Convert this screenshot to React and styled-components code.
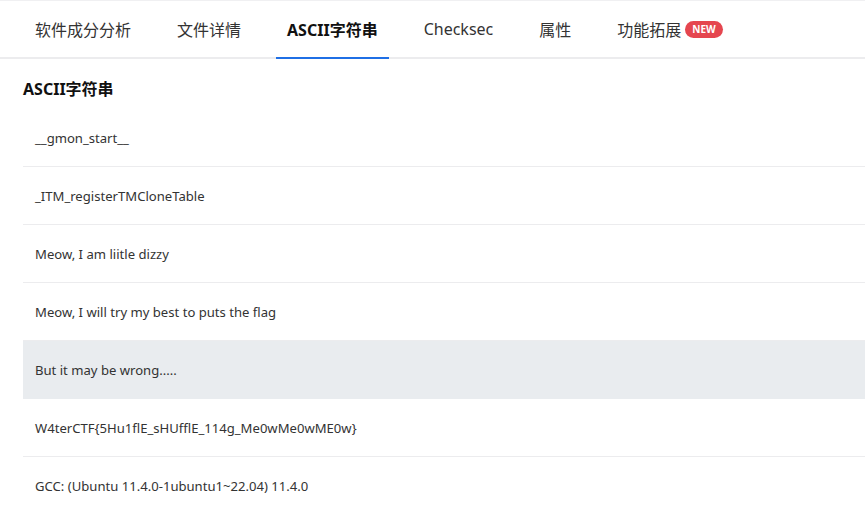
import React from "react";
import styled, { createGlobalStyle } from "styled-components";

const Global = createGlobalStyle`
  html, body { margin: 0; padding: 0; background: #fff; }
  body { font-family: "Noto Sans", "Noto Sans CJK SC", sans-serif; color: #333; }
`;

const Page = styled.div`
  width: 865px;
  height: 513px;
  overflow: hidden;
  background: #fff;
`;

const TabBar = styled.div`
  display: flex;
  align-items: stretch;
  gap: 24px;
  height: 59px;
  box-sizing: border-box;
  padding-left: 24px;
  border-top: 1px solid #f0f0f2;
  border-bottom: 2px solid #ececee;
`;

const Tab = styled.div`
  position: relative;
  display: flex;
  align-items: center;
  padding: 0 11px;
  font-size: 16px;
  font-family: "Noto Sans", "Noto Sans CJK SC", sans-serif;
  color: ${(p) => (p.$active ? "#111" : "#333")};
  font-weight: ${(p) => (p.$active ? 700 : 400)};
  white-space: nowrap;
  &::after {
    content: "";
    display: ${(p) => (p.$active ? "block" : "none")};
    position: absolute;
    left: 0;
    right: 0;
    bottom: -2px;
    height: 2px;
    background: #1f6fe5;
  }
`;

const Badge = styled.span`
  margin-left: 4px;
  background: #e5464f;
  color: #fff;
  font-size: 10px;
  font-weight: 700;
  line-height: 17px;
  padding: 0 7px;
  border-radius: 9px;
  font-family: "Open Sans", "Noto Sans", sans-serif;
`;

const Content = styled.div`
  padding-left: 23px;
`;

const Title = styled.div`
  font-size: 16px;
  font-weight: 700;
  color: #111;
  line-height: 20px;
  padding: 20px 0 10px;
  font-family: "Noto Sans", "Noto Sans CJK SC", sans-serif;
`;

const Row = styled.div`
  display: flex;
  align-items: center;
  height: 58px;
  box-sizing: border-box;
  padding-left: 12px;
  font-size: 13.1px;
  color: #333;
  border-bottom: 1px solid ${(p) => (p.$hl ? "#e9ecef" : "#ececee")};
  background: ${(p) => (p.$hl ? "#e9ecef" : "transparent")};
`;

const tabs = ["软件成分分析", "文件详情", "ASCII字符串", "Checksec", "属性", "功能拓展"];
const rows = [
  "__gmon_start__",
  "_ITM_registerTMCloneTable",
  "Meow, I am liitle dizzy",
  "Meow, I will try my best to puts the flag",
  "But it may be wrong.....",
  "W4terCTF{5Hu1flE_sHUfflE_114g_Me0wMe0wME0w}",
  "GCC: (Ubuntu 11.4.0-1ubuntu1~22.04) 11.4.0",
];

export default function App() {
  return (
    <Page>
      <Global />
      <TabBar>
        {tabs.map((t) => (
          <Tab key={t} $active={t === "ASCII字符串"}>
            {t}
            {t === "功能拓展" && <Badge>NEW</Badge>}
          </Tab>
        ))}
      </TabBar>
      <Content>
        <Title>ASCII字符串</Title>
        {rows.map((r, i) => (
          <Row key={i} $hl={i === 4}>
            {r}
          </Row>
        ))}
      </Content>
    </Page>
  );
}
